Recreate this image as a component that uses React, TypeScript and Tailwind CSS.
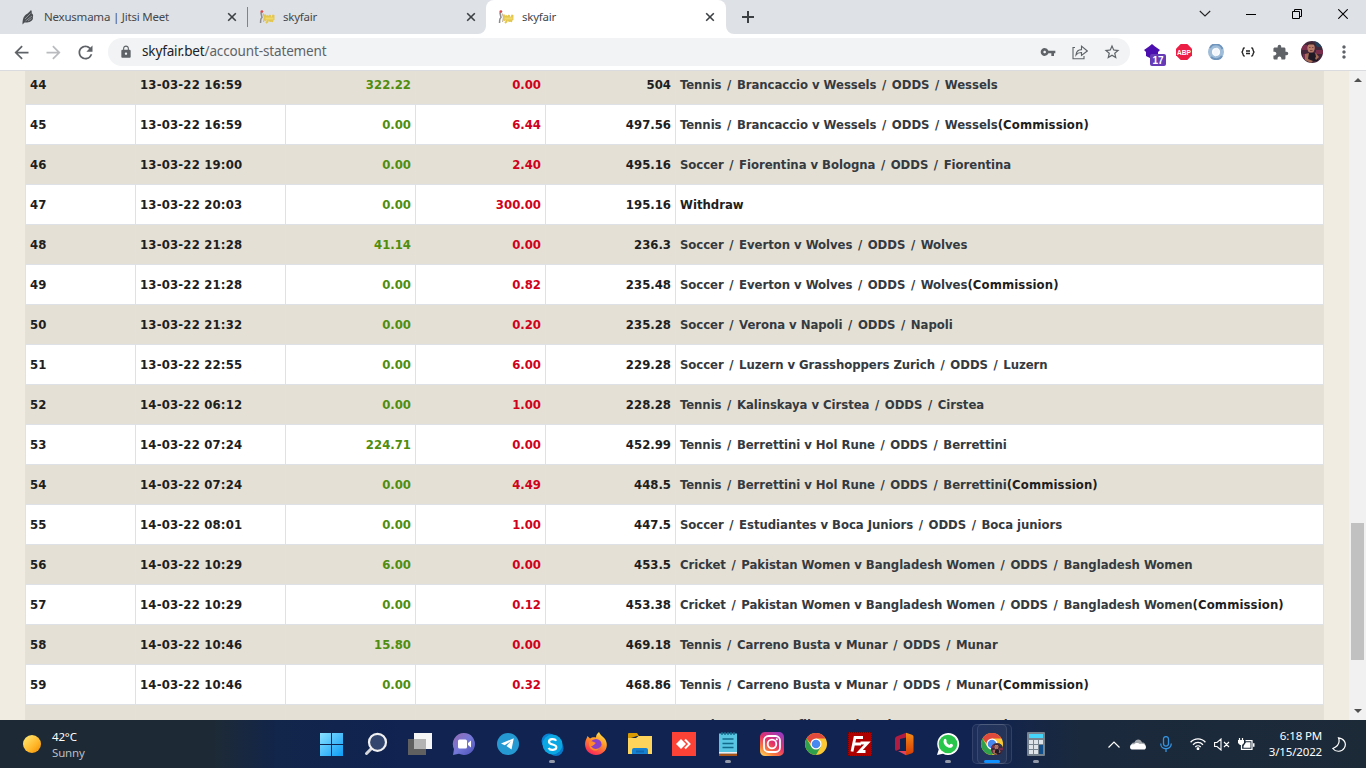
import React from "react";
import {
  MdArrowBack,
  MdArrowForward,
  MdExtension,
  MdLock,
  MdMoreVert,
  MdRefresh,
  MdStarBorder,
  MdVpnKey,
} from "react-icons/md";

type Row = { id: number; date: string; credit: string; debit: string; balance: string; event: string; commission?: boolean };

const rows: Row[] = [
  { id: 44, date: "13-03-22 16:59", credit: "322.22", debit: "0.00", balance: "504", event: "Tennis / Brancaccio v Wessels / ODDS / Wessels" },
  { id: 45, date: "13-03-22 16:59", credit: "0.00", debit: "6.44", balance: "497.56", event: "Tennis / Brancaccio v Wessels / ODDS / Wessels", commission: true },
  { id: 46, date: "13-03-22 19:00", credit: "0.00", debit: "2.40", balance: "495.16", event: "Soccer / Fiorentina v Bologna / ODDS / Fiorentina" },
  { id: 47, date: "13-03-22 20:03", credit: "0.00", debit: "300.00", balance: "195.16", event: "Withdraw" },
  { id: 48, date: "13-03-22 21:28", credit: "41.14", debit: "0.00", balance: "236.3", event: "Soccer / Everton v Wolves / ODDS / Wolves" },
  { id: 49, date: "13-03-22 21:28", credit: "0.00", debit: "0.82", balance: "235.48", event: "Soccer / Everton v Wolves / ODDS / Wolves", commission: true },
  { id: 50, date: "13-03-22 21:32", credit: "0.00", debit: "0.20", balance: "235.28", event: "Soccer / Verona v Napoli / ODDS / Napoli" },
  { id: 51, date: "13-03-22 22:55", credit: "0.00", debit: "6.00", balance: "229.28", event: "Soccer / Luzern v Grasshoppers Zurich / ODDS / Luzern" },
  { id: 52, date: "14-03-22 06:12", credit: "0.00", debit: "1.00", balance: "228.28", event: "Tennis / Kalinskaya v Cirstea / ODDS / Cirstea" },
  { id: 53, date: "14-03-22 07:24", credit: "224.71", debit: "0.00", balance: "452.99", event: "Tennis / Berrettini v Hol Rune / ODDS / Berrettini" },
  { id: 54, date: "14-03-22 07:24", credit: "0.00", debit: "4.49", balance: "448.5", event: "Tennis / Berrettini v Hol Rune / ODDS / Berrettini", commission: true },
  { id: 55, date: "14-03-22 08:01", credit: "0.00", debit: "1.00", balance: "447.5", event: "Soccer / Estudiantes v Boca Juniors / ODDS / Boca juniors" },
  { id: 56, date: "14-03-22 10:29", credit: "6.00", debit: "0.00", balance: "453.5", event: "Cricket / Pakistan Women v Bangladesh Women / ODDS / Bangladesh Women" },
  { id: 57, date: "14-03-22 10:29", credit: "0.00", debit: "0.12", balance: "453.38", event: "Cricket / Pakistan Women v Bangladesh Women / ODDS / Bangladesh Women", commission: true },
  { id: 58, date: "14-03-22 10:46", credit: "15.80", debit: "0.00", balance: "469.18", event: "Tennis / Carreno Busta v Munar / ODDS / Munar" },
  { id: 59, date: "14-03-22 10:46", credit: "0.00", debit: "0.32", balance: "468.86", event: "Tennis / Carreno Busta v Munar / ODDS / Munar", commission: true },
];

function BirdIcon() {
  return (
    <svg width="14" height="16" viewBox="0 0 14 16">
      <path d="M1.5 15.500C1.500 10 2.500 7.500 5 5.500 7.500 4 8.500 2.500 10 1c.8 1 1 2 .6 3.200 1.600.8 1.900 2.300 1.200 3.700.6 1.800-.3 3.600-2 4.300-1.800 1.300-4.500 1.500-6.300 1.300z" fill="#4b4e52" />
      <path d="M4 10 9.500 4.500M4.500 12 11 7M7 12l3.500-2.500" stroke="#a0a3a8" strokeWidth=".8" fill="none" />
    </svg>
  );
}

function SkyfairIcon() {
  return (
    <svg width="16" height="16" viewBox="0 0 16 16" fill="none">
      <path d="M1.500 14C2 11 1 10 3 8.500L2 4l2-2" stroke="#8c8c90" strokeWidth="1.500" />
      <circle cx="2.800" cy="2.500" r="1.300" fill="#e2484a" />
      <path d="M4 4.500 5.500 8l-1 5" stroke="#c9b8a0" strokeWidth="1.200" />
      <path d="M6 5.500v6l2.500-5v6L11 6v6.500l3.500-6.500v5M7 14l2-2M13 13l1-3" stroke="#e3c64c" strokeWidth="1.900" />
      <path d="M6.500 9.500h8" stroke="#f0d968" strokeWidth="2" />
    </svg>
  );
}

function CloseIcon() {
  return (
    <svg width="10" height="10" viewBox="0 0 10 10" stroke="#3c4043" strokeWidth="1.600">
      <path d="m1.200 1.200 7.600 7.600M8.800 1.200 1.200 8.800" />
    </svg>
  );
}

function TabStrip() {
  return (
    <div className="flex h-[34px] shrink-0 bg-[#dee1e6] text-[11.5px] tracking-[-0.22px] text-[#45484c]">
      <div className="flex h-[34px] w-[248px] items-center pl-[21px]">
        <BirdIcon />
        <span className="ml-[9px] w-[183px] whitespace-nowrap">Nexusmama | Jitsi Meet</span>
        <CloseIcon />
        <span className="ml-auto h-5 w-px bg-[#808387]" />
      </div>
      <div className="flex w-[238px] items-center pl-[11px]">
        <SkyfairIcon />
        <span className="ml-2 w-[183px]">skyfair</span>
        <CloseIcon />
      </div>
      <div className="relative flex w-[240px] items-center rounded-t-lg bg-white pl-3">
        <svg className="absolute bottom-0 -left-2" width="8" height="8"><path d="M8 0v8H0a8 8 0 0 0 8-8" fill="#fff" /></svg>
        <svg className="absolute -right-2 bottom-0" width="8" height="8"><path d="M0 0v8h8a8 8 0 0 1-8-8" fill="#fff" /></svg>
        <SkyfairIcon />
        <span className="ml-2 w-[183px]">skyfair</span>
        <CloseIcon />
      </div>
      <div className="flex w-[43px] items-center justify-center">
        <svg width="12" height="12" viewBox="0 0 12 12" stroke="#3c4043" strokeWidth="2"><path d="M6 0v12M0 6h12" /></svg>
      </div>
      <div className="ml-auto flex h-[28px]">
        <div className="flex w-[46px] items-center justify-center">
          <svg width="12" height="8" viewBox="0 0 12 8" fill="none" stroke="#222" strokeWidth="1.100"><path d="m.8 1 5.200 5 5.200-5" /></svg>
        </div>
        <div className="flex w-[46px] items-center justify-center">
          <svg width="10" height="10"><path d="M0 5h10v1H0z" fill="#000" /></svg>
        </div>
        <div className="flex w-[46px] items-center justify-center">
          <svg width="10" height="10" viewBox="0 0 10 10" fill="none" stroke="#000"><path d="M.5 2.500h7v7h-7zM2.500 2.500v-2h7v7h-2" /></svg>
        </div>
        <div className="flex w-[46px] items-center justify-center">
          <svg width="10" height="10" viewBox="0 0 10 10" stroke="#000" strokeWidth="1.100"><path d="m.3.300 9.400 9.400M9.700.3.300 9.700" /></svg>
        </div>
      </div>
    </div>
  );
}

function Avatar({ size }: { size: number }) {
  return (
    <svg width={size} height={size} viewBox="0 0 22 22">
      <defs><clipPath id={"face" + size}><circle cx="11" cy="11" r="11" /></clipPath></defs>
      <g clipPath={"url(#face" + size + ")"}>
        <path fill="#43263a" d="M0 0h22v22H0z" />
        <path fill="#7b2e4b" d="M0 4h6v5H0zM15 9h7v4h-7zM2 13h4v5H2z" />
        <path fill="#24405a" d="M13 0h9v6h-6z" />
        <ellipse cx="10" cy="7" rx="3.800" ry="4.800" fill="#b97c68" />
        <path d="M6 4.500C7 1 13 .5 15 5l-2-1.500H8z" fill="#3a2228" />
        <path d="M8 6.500h1.500M11 6.500h1.500M9 9.500h2.500" stroke="#6d3a38" strokeWidth=".8" />
        <path d="M6 13c3-2 8-2 11 2v5H8z" fill="#1e1924" />
        <path d="m4 13 4-1-1 6 5 2-2 2-6-3zM14 11l4 5-3 3-1-2 1-1z" fill="#a36a55" />
      </g>
    </svg>
  );
}

function Toolbar() {
  return (
    <div className="flex h-[37px] shrink-0 items-center border-b border-[#d9dbdf] bg-white pr-[6px] text-[#5f6368]">
      <div className="flex w-[108px] items-center pl-[5px]">
        <span className="flex w-8 justify-center"><MdArrowBack size={21} /></span>
        <span className="flex w-8 justify-center text-[#b9bbbe]"><MdArrowForward size={21} /></span>
        <span className="flex w-8 justify-center"><MdRefresh size={21} /></span>
      </div>
      <div className="flex h-7 w-[1022px] items-center rounded-full bg-[#f1f3f4] pr-[2px] pl-[11px]">
        <MdLock size={14} />
        <span className="ml-[9px] pb-px text-[13.5px] tracking-[-0.14px] text-[#5f6368]"><span className="text-[#202124]">skyfair.bet</span>/account-statement</span>
        <div className="ml-auto flex">
          <span className="flex w-8 items-center justify-center"><MdVpnKey size={16} /></span>
          <span className="flex w-8 items-center justify-center">
            <svg width="16" height="16" viewBox="0 0 16 16" fill="none" stroke="#5f6368" strokeWidth="1.100"><path d="M3 3.500H1v11.300h11V12M4 11c.3-3.700 2.200-5.300 5.500-5.400V2.200L15.300 7l-5.800 4.500V8.500C7 8.400 5.300 9.200 4 11Z" /></svg>
          </span>
          <span className="flex w-8 items-center justify-center"><MdStarBorder size={18} /></span>
        </div>
      </div>
      <div className="ml-auto flex h-7 items-center">
        <div className="relative flex w-8 justify-center">
          <svg width="16" height="16" viewBox="0 0 16 16"><path d="m8 0 3 2.500L16 6l-2 2v4l-6 3-6-3V8L0 6l5-3.500z" fill="#4a0fae" /></svg>
          <span className="absolute top-[10px] left-[14px] flex h-3 w-4 items-center justify-center rounded-[2px] bg-[#673ab7] font-['Liberation_Sans'] text-[10px] font-bold text-white">17</span>
        </div>
        <div className="flex w-8 justify-center">
          <svg width="16" height="16" viewBox="0 0 16 16"><path d="M4.700 0h6.600L16 4.700v6.600L11.300 16H4.700L0 11.300V4.700z" fill="#ed1e45" /><text x="8" y="10.800" textAnchor="middle" textLength="14" lengthAdjust="spacingAndGlyphs" fontSize="8" fontWeight="bold" fill="#fff" fontFamily="Liberation Sans, sans-serif">ABP</text></svg>
        </div>
        <div className="flex w-8 justify-center">
          <svg width="16" height="16" viewBox="0 0 16 16" fill="none"><circle cx="8" cy="8" r="6" stroke="#9fbcd8" strokeWidth="4" /><path d="M2 4C4-1 12-1 14.500 5M14 12c-2 4-8 4-11 1" stroke="#6f95bd" strokeWidth="2" /><path d="M9 3.500c3.500 2.500 2 7-1.500 9C3.500 10 5 5.500 9 3.500Z" fill="#f3f7fb" /></svg>
        </div>
        <div className="flex w-8 justify-center">
          <svg width="14" height="10" viewBox="0 0 14 10" fill="none" stroke="#222" strokeWidth="1.400"><path d="M3.700 1H3C1.500 1 2.500 5 .5 5 2.500 5 1.500 9 3 9h.7M10.300 1h.7c1.500 0 .5 4 2.500 4-2 0-1 4-2.500 4h-.7M5 4h4M5 6.500h4" /></svg>
        </div>
        <div className="flex w-8 justify-center"><MdExtension size={17} /></div>
        <div className="flex w-8 justify-center"><Avatar size={22} /></div>
        <div className="flex w-8 justify-center"><MdMoreVert size={20} /></div>
      </div>
    </div>
  );
}

const cell = "flex items-center border-r border-b border-[#dee2e6] px-1 whitespace-pre";

function EventPath({ text }: { text: string }) {
  const parts = text.split("/");
  return (
    <span className="tracking-[-0.05px] text-[#343a40]">
      {parts.map((part, i) => (
        <React.Fragment key={i}>
          {i > 0 && <span className="px-[1.55px]">/</span>}
          {part}
        </React.Fragment>
      ))}
    </span>
  );
}

function Statement() {
  return (
    <div className="flex min-h-0 flex-1 bg-[#f0ece1]">
      <div className="flex min-w-0 flex-1 flex-col justify-start overflow-hidden pl-[25px]">
        <div className="-mt-[6px] w-[1299px] border-l border-[#dee2e6] font-['DejaVu_Sans_Condensed','DejaVu_Sans',sans-serif] text-[13px] font-bold text-[#1e1e1e] [font-stretch:condensed]">
          {rows.map((r) => (
            <div key={r.id} className="grid h-10 grid-cols-[110px_150px_130px_130px_130px_648px] odd:bg-[#e4e0d5] even:bg-white">
              <div className={cell}>{r.id}</div>
              <div className={cell + " tracking-[0.18px]"}>{r.date}</div>
              <div className={cell + " justify-end text-[#508d0e]"}>{r.credit}</div>
              <div className={cell + " justify-end text-[#d0021b]"}>{r.debit}</div>
              <div className={cell + " justify-end"}>{r.balance}</div>
              <div className={cell}>
                {r.event === "Withdraw" ? <span>{r.event}</span> : <EventPath text={r.event} />}
                {r.commission && <span className="tracking-[0.1px]">(Commission)</span>}
              </div>
            </div>
          ))}
          <div className="grid h-10 grid-cols-[110px_150px_130px_130px_130px_648px] bg-[#e4e0d5]">
            <div className={cell} /><div className={cell} /><div className={cell} /><div className={cell} /><div className={cell} />
            <div className={cell}><EventPath text="Tennis / Gael Monfils v Carlos Alcaraz / ODDS / Alcaraz" /></div>
          </div>
        </div>
      </div>
      <div className="flex w-[17px] flex-col items-center bg-[#f1f1f1]">
        <svg className="mt-[7px]" width="8" height="4"><path d="M4 0 8 4H0z" fill="#505050" /></svg>
        <div className="mt-[441px] h-[137px] w-[13px] bg-[#c1c1c1]" />
        <svg className="mt-auto mb-[7px]" width="8" height="4"><path d="M0 0h8L4 4z" fill="#505050" /></svg>
      </div>
    </div>
  );
}

function ChromeLogo({ size }: { size: number }) {
  return (
    <svg width={size} height={size} viewBox="0 0 22 22">
      <circle cx="11" cy="11" r="11" fill="#fbc934" />
      <path d="M1.500 5.500A11 11 0 0 1 20.500 5.500H11L7 12z" fill="#e04a3c" />
      <path d="M1.500 5.500A11 11 0 0 0 11 22l4.800-8.300L6.300 13.800z" fill="#31a04d" />
      <circle cx="11" cy="11" r="5.500" fill="#fff" />
      <circle cx="11" cy="11" r="4.300" fill="#4688ef" />
    </svg>
  );
}

function AppIcon({ children, running }: { children: React.ReactNode; running?: boolean }) {
  return (
    <div className="relative flex h-12 w-11 items-center justify-center">
      {children}
      {running && <span className="absolute bottom-[5px] h-[3px] w-[6px] rounded-full bg-[#9299a8]" />}
    </div>
  );
}

function Taskbar() {
  return (
    <div className="flex h-12 shrink-0 bg-[linear-gradient(90deg,#1d2a36_0px,#1d2a36_215px,#12254a_275px,#102351_400px,#102351_980px,#1a293c_1080px,#1c2a38_1366px)] text-[11.5px] tracking-[-0.15px] text-white">
      <div className="flex w-[310px] items-center pl-[23px]">
        <div className="size-[18px] rounded-full bg-[linear-gradient(135deg,#ffee7a,#ffb82a_60%,#f28a00)]" />
        <div className="ml-[11px] flex flex-col pt-px leading-4"><span>42°C</span><span className="text-[#b9bfc5]">Sunny</span></div>
      </div>
      <AppIcon>
        <svg className="mr-px" width="23" height="23" viewBox="0 0 23 23"><defs><linearGradient id="win" x2="1" y2="1" gradientUnits="objectBoundingBox"><stop stopColor="#8ae1ff" /><stop offset="1" stopColor="#0c9cf5" /></linearGradient></defs><path fill="url(#win)" d="M0 0h11v11H0zM12 0h11v11H12zM0 12h11v11H0zM12 12h11v11H12z" /></svg>
      </AppIcon>
      <AppIcon>
        <svg width="24" height="24" viewBox="0 0 24 24"><path d="m8 16-5.500 5.500" stroke="#d5d7da" strokeWidth="3" strokeLinecap="round" /><circle cx="13.500" cy="10.300" r="8.500" fill="#33466d" stroke="#f0f0f0" strokeWidth="2.200" /></svg>
      </AppIcon>
      <AppIcon>
        <svg width="24" height="24" viewBox="0 0 24 24"><path d="M6 1h18v16H6z" fill="#f5f5f5" /><path d="M0 7h18v16H0z" fill="#606060" /><path d="M6 7h12v10H6z" fill="#b3b3b3" /></svg>
      </AppIcon>
      <AppIcon>
        <svg width="24" height="24" viewBox="0 0 24 24"><defs><linearGradient id="chat" x2="1" y2="1"><stop stopColor="#976bb0" /><stop offset=".5" stopColor="#7478d8" /><stop offset="1" stopColor="#4b50b8" /></linearGradient></defs><path d="M12 1a11 11 0 1 1-5 20.800L1 23l1-6A11 11 0 0 1 12 1" fill="url(#chat)" /><rect x="6" y="7.500" width="9" height="9" rx="1.500" fill="#fff" /><path d="m16 11 3-2.500v7L16 13z" fill="#fff" /></svg>
      </AppIcon>
      <AppIcon>
        <svg width="22" height="22" viewBox="0 0 22 22"><circle cx="11" cy="11" r="11" fill="#2599d2" /><path d="M16.800 5.300 4 10.500l3.700 1.700L14 8l-4.500 5 5 3.500z" fill="#fff" /></svg>
      </AppIcon>
      <AppIcon running>
        <svg width="23" height="23" viewBox="0 0 23 23"><circle cx="8" cy="8" r="7.500" fill="#0a82d4" /><circle cx="15" cy="15.500" r="7.500" fill="#0877c7" /><circle cx="11.500" cy="11.500" r="10" fill="#0aa7e3" /><path d="M15.200 7.800C13.800 5.500 8 5.500 8 8.700c0 3.700 7.300 1.800 7.300 5.500 0 3.300-6.300 3.400-7.700.7" fill="none" stroke="#fff" strokeWidth="2.200" /></svg>
      </AppIcon>
      <AppIcon>
        <svg width="24" height="24" viewBox="0 0 24 24"><defs><linearGradient id="fox" x1=".8" y1="0" x2=".3" y2="1"><stop stopColor="#ffe74a" /><stop offset=".45" stopColor="#ff9228" /><stop offset="1" stopColor="#f8225c" /></linearGradient></defs><path d="M15 0c1 3 4 4.500 6 7 5 8-1 16-9 16S-.5 16 1.500 9C2 7 3 6 3.500 4L6 6.500C8 5 10 5 12 5.500 12 3 13 1.500 15 0" fill="url(#fox)" /><circle cx="12" cy="12.500" r="5.600" fill="#8840c9" /><path d="M5 10c3-2 5 0 7 1-2 1-2 3-5 3 3 5 10 3 11-2-1 9-14 9-13-2" fill="#ff8b2d" /></svg>
      </AppIcon>
      <AppIcon>
        <svg width="24" height="22" viewBox="0 0 24 22"><path d="M0 1q0-1 1-1h8l2 3h-2L0 6z" fill="#d99900" /><path d="M0 5h8l2.500-2H24v18H0z" fill="#ffd45a" /><path d="M4 21v-4q0-2 2-2h12q2 0 2 2v4z" fill="#1680d1" /><path d="M8 17.500h8v2H8z" fill="#0f67b0" /></svg>
      </AppIcon>
      <AppIcon>
        <svg width="24" height="24" viewBox="0 0 24 24"><path d="M0 0h24v24H0z" fill="#fc4236" /><path d="m4 12 5-5 5 5-5 5z" fill="#fff" /><path d="m13 7.500 4.500 4.500-4.500 4.500" fill="none" stroke="#fff" strokeWidth="2" /></svg>
      </AppIcon>
      <AppIcon running>
        <svg width="18" height="24" viewBox="0 0 18 24"><path d="M0 1.500h18V20H0z" fill="#58c5e2" /><path d="M0 20h18v1.800H0z" fill="#eee" /><path d="M0 21.800h18V24H0z" fill="#a85519" /><path d="M3 0v3M6 0v3M9 0v3M12 0v3M15 0v3M3.500 7h11M3.500 11.500h11M3.500 15.500h11" stroke="#136b8c" strokeWidth="1.400" /></svg>
      </AppIcon>
      <AppIcon>
        <svg width="24" height="24" viewBox="0 0 24 24"><defs><linearGradient id="insta" x1=".8" y1="0" x2=".15" y2="1"><stop stopColor="#983abf" /><stop offset=".45" stopColor="#e4306a" /><stop offset=".8" stopColor="#f9843c" /><stop offset="1" stopColor="#ffd15c" /></linearGradient></defs><rect width="24" height="24" rx="5" fill="url(#insta)" /><rect x="4" y="4" width="16" height="16" rx="4.500" fill="none" stroke="#fff" strokeWidth="1.800" /><circle cx="12" cy="12" r="4.300" fill="none" stroke="#fff" strokeWidth="1.800" /><circle cx="16.800" cy="7.300" r="1.100" fill="#fff" /></svg>
      </AppIcon>
      <AppIcon><ChromeLogo size={22} /></AppIcon>
      <AppIcon>
        <svg width="24" height="24" viewBox="0 0 24 24"><path d="M0 0h24v24H0z" fill="#ae0000" stroke="#5a0505" strokeDasharray="1 1" strokeWidth="1.500" /><path d="M4 19.500 7 5.500h8M6 12h7M12.500 11h7l-8 8.500h6" stroke="#fff" strokeWidth="2.800" fill="none" /></svg>
      </AppIcon>
      <AppIcon>
        <svg width="20" height="24" viewBox="0 0 20 24"><defs><linearGradient id="office" x2="0" y2="1"><stop stopColor="#f58a16" /><stop offset="1" stopColor="#d63b05" /></linearGradient></defs><path d="m12 .8-9 3.500C1.500 5 1 6 1 7v10c0 1.500.5 2 2 1.500l3-1.500V7l6-1.500z" fill="#b21c40" /><path d="m12 .8 6 2c1 .5 1.500 1 1.500 2.200v14c0 1-.5 1.800-1.500 2.200l-6 2z" fill="url(#office)" /><path d="M4 19h8v4.200z" fill="#e3435e" /></svg>
      </AppIcon>
      <AppIcon running>
        <svg width="24" height="24" viewBox="0 0 24 24"><path d="M12 1a11 11 0 1 1-5 20.700L1 23l1.700-5.500A11 11 0 0 1 12 1" fill="#fff" /><circle cx="12" cy="12" r="9.300" fill="#28c64b" /><path d="M8 7.500c2-2 3 1 2.500 2.500.5 1.500 2 2.500 3 3 1.500-2.500 3.500-.5 3.500.5-1 4.500-9 2-9.500-4Z" fill="#fff" /></svg>
      </AppIcon>
      <div className="relative flex h-12 w-11 items-center justify-center">
        <span className="absolute top-1 left-[7px] h-10 w-[35px] rounded-[5px] border border-white/10 bg-white/3" />
        <span className="absolute top-1 left-[2px] h-10 w-[35px] rounded-[5px] border border-white/10 bg-white/5" />
        <span className="relative"><ChromeLogo size={22} /></span>
        <span className="absolute top-[23px] left-[21px]"><Avatar size={12} /></span>
        <span className="absolute bottom-[5px] h-[3px] w-4 rounded-full bg-[#1090ff]" />
      </div>
      <AppIcon running>
        <svg width="18" height="24" viewBox="0 0 18 24"><rect width="18" height="24" rx="1" fill="#77838e" /><path d="M2 2h14v4H2z" fill="#45d5fb" /><path d="M2 8h4v4H2zM7 8h4v4H7zM12 8h4v4h-4zM2 13h4v4H2zM7 13h4v4H7zM2 18h4v4H2zM7 18h4v4H7z" fill="#dde3e8" /><path d="M12 13h4v9h-4z" fill="#114e8c" /></svg>
      </AppIcon>
      <div className="ml-auto flex items-center pr-[20px]">
        <svg width="12" height="7" viewBox="0 0 12 7" fill="none" stroke="#fff" strokeWidth="1.200"><path d="m.5 6.500 5.500-5.500 5.500 5.500" /></svg>
        <svg className="ml-[10px]" width="16" height="11" viewBox="0 0 16 11"><path d="M1 7.500C1 4 3 3.500 4.500 3.500 5.500-.5 11-.5 12 3.500c3 0 3.500 2 3.500 4z" fill="#a4a9ae" /><path d="M0 8c0-3 3-3 4-2.500C6 3 8.500 4 10 5c2-1 6 0 6 3s-2 2.500-3 2.500H3C1 10.500 0 10 0 8" fill="#fff" /></svg>
        <svg className="ml-[14px]" width="12" height="16" viewBox="0 0 12 16" fill="none" stroke="#3593df" strokeWidth="1.300"><rect x="3.500" y=".6" width="5" height="9.500" rx="2.500" /><path d="M.7 7.500c0 7 10.600 7 10.600 0M6 12.800V16" /></svg>
        <svg className="ml-[18px]" width="16" height="12" viewBox="0 0 16 12" fill="none" stroke="#fff" strokeWidth="1.300"><path d="M.6 4.300c4-4.500 10.800-4.500 14.800 0M3 6.700c3-3 7-3 10 0M5.300 9c1.500-1.500 3.900-1.500 5.400 0" /><circle cx="8" cy="10.700" r=".8" fill="#fff" /></svg>
        <svg className="ml-2" width="16" height="13" viewBox="0 0 16 13" fill="none" stroke="#fff" strokeWidth="1.100"><path d="M.6 4.500h2.400L7 1v11L3 8.500H.6zM10 4l5 5M15 4l-5 5" /></svg>
        <svg className="ml-2" width="17" height="13" viewBox="0 0 17 13"><path d="M1.500 0v2M4.500 0v2" stroke="#fff" strokeWidth="1.200" /><path d="M0 2h6v3L4 7H2L0 5z" fill="#fff" /><path d="M3.500 6v5.400H14V2.600H7.500" fill="none" stroke="#fff" strokeWidth="1.200" /><path d="M5.500 8 8 4.300h4.500v5.500h-7zM15 5.200h1.500v3.600H15z" fill="#fff" /></svg>
        <div className="ml-[13px] flex w-[54px] flex-col items-end leading-4 whitespace-nowrap"><span>6:18 PM</span><span>3/15/2022</span></div>
        <svg className="ml-[10px]" width="14" height="15" viewBox="0 0 14 15" fill="none" stroke="#fff" strokeWidth="1.200"><path d="M6.500.8c1.800 5-.5 8.500-5.700 10.700 3 4 9.200 3.500 11.500-.5C15 6.500 12 1.300 6.500.8Z" /></svg>
      </div>
    </div>
  );
}

export default function App() {
  return (
    <div className="flex h-[768px] w-[1366px] flex-col overflow-hidden font-['Noto_Sans',sans-serif]">
      <TabStrip />
      <Toolbar />
      <Statement />
      <Taskbar />
    </div>
  );
}
